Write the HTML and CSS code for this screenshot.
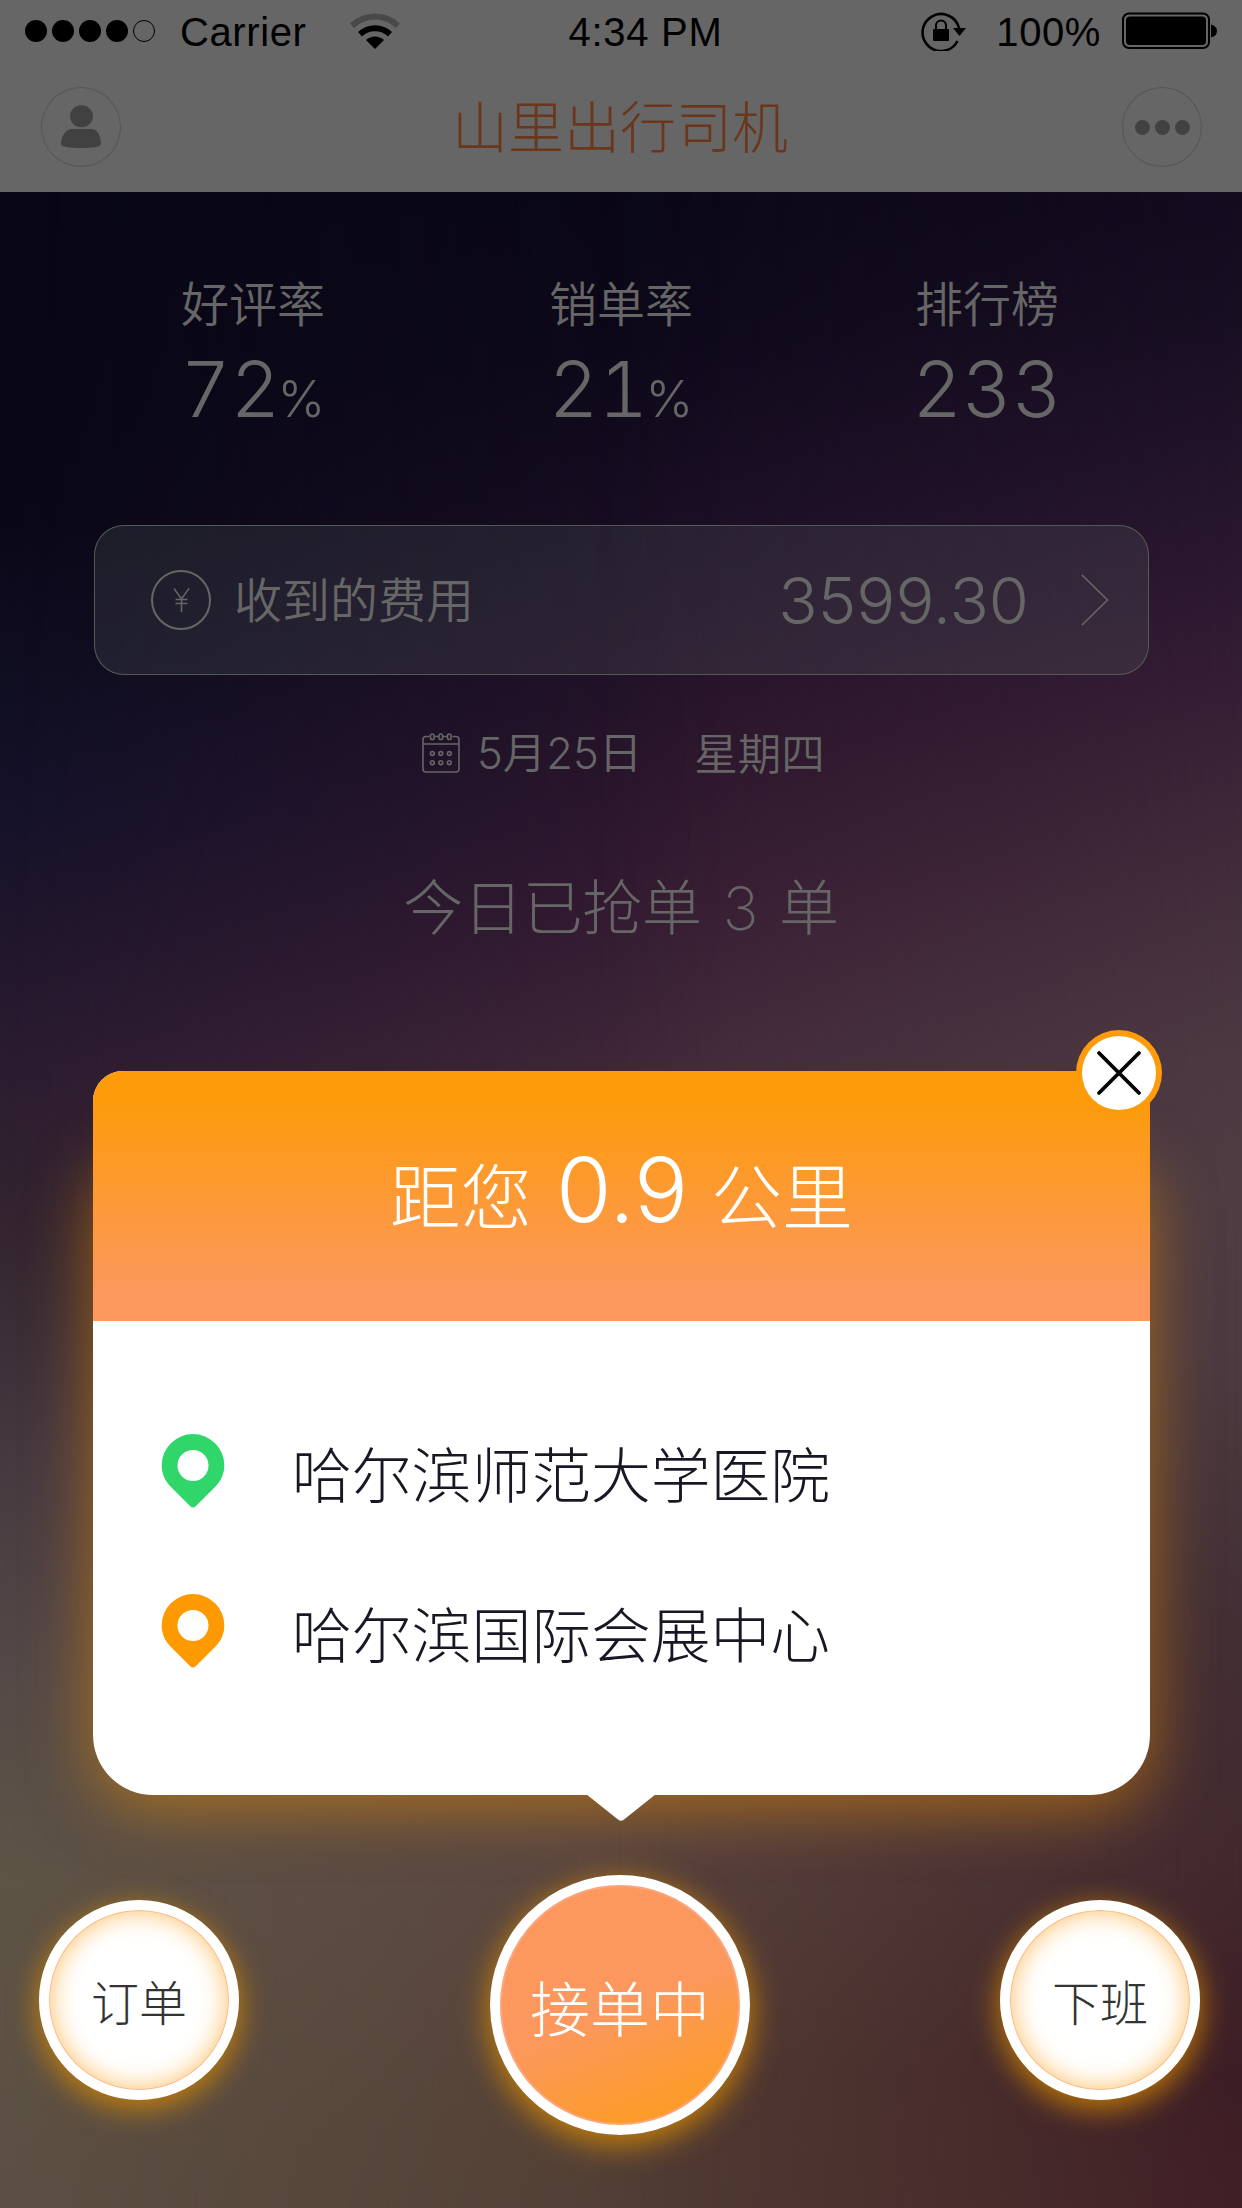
FILE: index.html
```html
<!DOCTYPE html>
<html lang="zh-CN">
<head>
<meta charset="utf-8">
<title>山里出行司机</title>
<link rel="stylesheet" href="styles.css">
</head>
<body>
<div class="screen">
  <header class="header">
    <div class="status">
      <div class="status-left">
        <div class="signal"><i></i><i></i><i></i><i></i><i class="empty"></i></div>
        <span class="carrier">Carrier</span>
        <svg class="wifi" width="50" height="36" viewBox="0 0 50 36">
          <path d="M0 10.5A36 36 0 0 1 50 10.5L46 15A30 30 0 0 0 4 15Z" fill="#494949"/>
          <path d="M8 19A25 25 0 0 1 42 19L38 23.500A19 19 0 0 0 12 23.500Z"/>
          <path d="M16 27A13 13 0 0 1 34 27L25 36Z"/>
        </svg>
      </div>
      <span class="time">4:34 PM</span>
      <div class="status-right">
        <svg class="lock" width="46" height="40" viewBox="0 0 46 40">
          <path d="M36.500 30A18.500 18.500 0 1 1 38 17" fill="none" stroke="#000" stroke-width="2.600"/>
          <path d="M32 17H45L38.500 25Z"/>
          <rect x="12" y="18" width="16" height="12" rx="1"/>
          <path d="M15 18V14.500a5 5 0 0 1 10 0V18" fill="none" stroke="#000" stroke-width="2"/>
        </svg>
        <span class="percent">100%</span>
        <svg class="battery" width="96" height="38" viewBox="0 0 96 38">
          <rect x="1" y="1.500" width="86" height="34.500" rx="6" fill="none" stroke="#000" stroke-width="2"/>
          <rect x="4" y="4.500" width="80" height="28.500" rx="4"/>
          <path d="M89 12.500q6 1.500 6 6.500t-6 6.500Z"/>
        </svg>
      </div>
    </div>
    <div class="navbar">
      <button class="nav-btn" aria-label="profile">
        <svg width="80" height="80" viewBox="0 0 80 80" fill="#414141">
          <ellipse cx="40.500" cy="29.200" rx="11.500" ry="11"/>
          <path d="M31 42h20c6 0 9 9 9 15 0 3-9 4-19.500 4S20 60 20 57c0-6 4-15 11-15Z"/>
        </svg>
      </button>
      <h1 class="title">山里出行司机</h1>
      <button class="nav-btn" aria-label="more">
        <svg width="80" height="80" viewBox="0 0 80 80" fill="#414141">
          <circle cx="20.500" cy="40.500" r="7.500"/><circle cx="40.500" cy="40.500" r="7.500"/><circle cx="60.500" cy="40.500" r="7.500"/>
        </svg>
      </button>
    </div>
  </header>

  <section class="stats">
    <div class="stat"><div class="label">好评率</div><div class="num">72<small>%</small></div></div>
    <div class="stat"><div class="label">销单率</div><div class="num">21<small>%</small></div></div>
    <div class="stat"><div class="label">排行榜</div><div class="num">233</div></div>
  </section>

  <section class="fee">
    <svg class="yen" width="60" height="60" viewBox="0 0 60 60" fill="none" stroke="#666">
      <circle cx="30" cy="30" r="29" stroke-width="2"/>
      <path d="M23 18.500l7.500 10.500 7.500-10.500M30.500 29v13M24.500 29.500h12M24.500 33.500h12" stroke-width="1.500"/>
    </svg>
    <span class="fee-label">收到的费用</span>
    <span class="fee-num">3599.30</span>
    <svg class="chev" width="28" height="52" viewBox="0 0 28 52" fill="none" stroke="#666" stroke-width="1.600"><path d="M1 1L26.500 26 1 51"/></svg>
  </section>

  <section class="date">
    <svg class="cal" width="38" height="40" viewBox="0 0 38 40" fill="none" stroke="#666" stroke-width="1.600">
      <path d="M7.500 3.500H4a3 3 0 0 0-3 3V36a3 3 0 0 0 3 3H34a3 3 0 0 0 3-3V6.500a3 3 0 0 0-3-3h-3.500M12.500 3.500h4M21 3.500h4M1 11h36"/>
      <rect x="8.500" y="1" width="3.600" height="5.500" rx="1.800"/><rect x="17" y="1" width="3.600" height="5.500" rx="1.800"/><rect x="25.500" y="1" width="3.600" height="5.500" rx="1.800"/>
      <circle cx="10.300" cy="20.500" r="1.900"/><circle cx="18.800" cy="20.500" r="1.900"/><circle cx="27.300" cy="20.500" r="1.900"/>
      <circle cx="10.300" cy="29.700" r="1.900"/><circle cx="18.800" cy="29.700" r="1.900"/><circle cx="27.300" cy="29.700" r="1.900"/>
    </svg>
    <span class="day"><b>5</b>月<b>25</b>日</span>
    <span class="week">星期四</span>
  </section>

  <p class="today">今日已抢单<b>3</b>单</p>

  <section class="popup">
    <div class="popup-head"><span>距您</span><b>0.9</b><span>公里</span></div>
    <ul class="places">
      <li>
        <svg class="pin" width="64" height="74" viewBox="0 0 64 74"><path fill="#31d66b" fill-rule="evenodd" d="M32 0A31.300 31.300 0 0 1 63.300 31.300C63.300 40 60 47 54.500 52.500L35 72Q32 75 29 72L9.500 52.500C4 47 .7 40 .7 31.300A31.300 31.300 0 0 1 32 0ZM32 16a15.500 15.500 0 1 0 0 31 15.500 15.500 0 1 0 0-31Z"/></svg>
        <span>哈尔滨师范大学医院</span>
      </li>
      <li>
        <svg class="pin" width="64" height="74" viewBox="0 0 64 74"><path fill="#fd9a02" fill-rule="evenodd" d="M32 0A31.300 31.300 0 0 1 63.300 31.300C63.300 40 60 47 54.500 52.500L35 72Q32 75 29 72L9.500 52.500C4 47 .7 40 .7 31.300A31.300 31.300 0 0 1 32 0ZM32 16a15.500 15.500 0 1 0 0 31 15.500 15.500 0 1 0 0-31Z"/></svg>
        <span>哈尔滨国际会展中心</span>
      </li>
    </ul>
    <svg class="arrow" width="70" height="28" viewBox="0 0 70 28"><path fill="#fff" d="M0 0H70L38 25.500Q35 28 32 25.500Z"/></svg>
    <button class="close" aria-label="close">
      <svg width="86" height="86" viewBox="0 0 86 86">
        <circle cx="43" cy="43" r="43" fill="#fd9b0a"/><circle cx="43" cy="43" r="37" fill="#fff"/>
        <path d="M23 23L63 63M63 23L23 63" stroke="#000" stroke-width="3.800" stroke-linecap="round"/>
      </svg>
    </button>
  </section>

  <nav class="actions">
    <button class="round">订单</button>
    <button class="round main">接单中</button>
    <button class="round">下班</button>
  </nav>
</div>
</body>
</html>
```
FILE: styles.css
```css
* { box-sizing: border-box; }

body {
  margin: 0;
  font-family: "Noto Sans CJK SC", sans-serif;
  font-weight: 300;
}

button {
  padding: 0;
  border: 0;
  background: none;
  font: inherit;
}

b, small { font-family: Inter, sans-serif; font-weight: 300; }

.screen {
  position: relative;
  isolation: isolate;
  width: 1242px;
  height: 2208px;
  overflow: hidden;
  display: flex;
  flex-direction: column;
  color: #666;
  background: linear-gradient(173deg, #0a0716 9%, #0e091a 18%, #1d1026 28%, #2c162c 36%, #371c33 42%, #42283a 48%, #4e3a3f 64%, #5a443e 82%, #533e34 92%, #503c33 100%);
}

/* side washes that fade towards the middle of the backdrop */
.screen::before,
.screen::after {
  content: "";
  position: absolute;
  inset: 0;
  z-index: -1;
}
.screen::before {
  background: linear-gradient(#090717 9%, #0a0818 24%, #0f0d20 30%, #15122a 37%, #1f162b 42%, #2b1b30 48%, #34252f 56%, #463940 66%, #554a47 76%, #5e5446 85%, #5b4f43 100%);
  mask-image: linear-gradient(90deg, #000 0%, rgba(0, 0, 0, .6) 22%, transparent 58%);
}
.screen::after {
  background: linear-gradient(#130b1e 9%, #190f23 15%, #23142a 21%, #2d1931 27%, #371f35 32%, #442f3c 41%, #4c3942 48%, #4e3d43 54%, #4b3a3f 62%, #432f35 73%, #42292e 84%, #3d1d25 94%, #411f26 100%);
  mask-image: linear-gradient(270deg, #000 0%, rgba(0, 0, 0, .6) 18%, transparent 52%);
}

.header {
  height: 192px;
  background: #666;
}

.status {
  height: 60px;
  padding: 0 24px 0 25px;
  display: grid;
  grid-template-columns: 1fr auto 1fr;
  align-items: center;
  color: #000;
  font: 40px/60px "Liberation Sans", Arial, sans-serif;
}

.status-left, .status-right { display: flex; align-items: center; }
.status-right { justify-content: flex-end; }
.signal { display: flex; gap: 5px; margin-right: 25px; }
.signal i { width: 22px; height: 22px; border-radius: 50%; background: #000; }
.signal .empty { background: none; border: 1px solid #000; }
.carrier, .percent { letter-spacing: .6px; }
.carrier { padding-top: 2px; }
.wifi { margin-left: 44px; }
.time { padding: 2px 0 0 48px; letter-spacing: .7px; }
.lock { margin-right: 29px; }
.percent { padding-top: 2px; margin-right: 21px; }
.battery { flex: none; }

.navbar {
  padding: 27px 40px 0 41px;
  display: flex;
  justify-content: space-between;
}

.nav-btn {
  width: 80px;
  height: 80px;
  border-radius: 50%;
  box-shadow: inset 0 0 0 1px #565656;
}

.title {
  margin: 0 3px 0 0;
  font-size: 56px;
  font-weight: 300;
  line-height: 74px;
  color: #6b371c;
}

.stats {
  padding: 77px 69px 0;
  display: grid;
  grid-template-columns: repeat(3, 1fr);
  text-align: center;
}

.stat:last-child { margin-left: -4px; }
.label { font-size: 48px; font-weight: 350; line-height: 64px; }
.num {
  margin-top: 8px;
  font: 350 77px/96px Inter, sans-serif;
  font-feature-settings: "tnum";
}
.num small { font-size: 51px; margin-left: -3px; }

.fee {
  height: 150px;
  margin: 78px 93px 0 94px;
  padding: 0 40px 0 57px;
  display: flex;
  align-items: center;
  border-radius: 30px;
  background: rgba(102, 112, 112, .2);
  box-shadow: inset 0 0 0 1px #555956;
}

.fee-label { margin: -6px 0 0 23px; font-size: 48px; font-weight: 350; line-height: 60px; }
.fee-num { margin: 1px 0 0 auto; font: 350 65px/80px Inter, sans-serif; }
.chev { margin-left: 52px; }

.date {
  height: 60px;
  margin: 48px 0 0 422px;
  display: flex;
  align-items: center;
  font-size: 43.500px;
  font-weight: 350;
  line-height: 60px;
}
.day { margin: -2px 0 0 17px; }
.week { margin: -2px 0 0 52px; }

.today {
  margin: 81px 0 0;
  text-align: center;
  font-size: 60px;
  line-height: 80px;
  letter-spacing: -.3px;
}
.today b { margin: 0 21px; font-weight: 250; }

.popup {
  position: relative;
  isolation: isolate;
  width: 1057px;
  height: 724px;
  margin: 123px 0 0 93px;
  border-radius: 30px 30px 60px 60px;
  background: #fff;
  flex: none;
}

/* the glow starts below the top edge of the card */
.popup::before {
  content: "";
  position: absolute;
  z-index: -1;
  inset: 75px 0 0;
  border-radius: 60px;
  box-shadow: 0 12px 64px rgba(253, 154, 2, .5);
}

.popup-head {
  height: 250px;
  display: flex;
  justify-content: center;
  align-items: baseline;
  border-radius: 30px 0 0 0;
  background: linear-gradient(#fd9b0a 10%, #fc985e 90%);
  color: #fff;
  font-size: 71px;
  line-height: 240px;
}
.popup-head b { margin: 0 23px 0 24px; font-size: 90px; font-weight: 350; position: relative; top: -1px; }

.places {
  margin: 0;
  padding: 104px 0 0 68px;
  list-style: none;
}
.places li {
  height: 91px;
  margin-bottom: 69px;
  display: flex;
  align-items: center;
  gap: 67px;
  color: #181825;
  font-size: 59.800px;
  line-height: 91px;
}
.places span { padding-top: 3px; }

.arrow { position: absolute; left: 493px; top: 723px; }
.close { position: absolute; left: 983px; top: -41px; width: 86px; height: 86px; }
.close svg, .nav-btn svg { display: block; }

.actions {
  padding: 80px 42px 0 39px;
  display: flex;
  justify-content: space-between;
  align-items: flex-start;
}

.round {
  width: 200px;
  height: 200px;
  margin-top: 25px;
  border: 10px solid #fff;
  border-radius: 50%;
  background: #fff;
  box-shadow: 0 8px 28px 2px rgba(222, 140, 0, .75), inset 0 0 0 1px #fdb98c, inset 0 0 26px 1px #fdc06a;
  color: #333;
  font-size: 48px;
  line-height: 176px;
}

.main {
  width: 260px;
  height: 260px;
  margin: 0 0 0 1px;
  background: linear-gradient(158deg, #fc985e 50%, #fd9c1c 95%);
  box-shadow: 0 8px 30px 2px rgba(222, 140, 0, .8), inset 0 0 0 2px #fba57e;
  color: #fff;
  font-size: 60px;
  line-height: 235px;
}
```
